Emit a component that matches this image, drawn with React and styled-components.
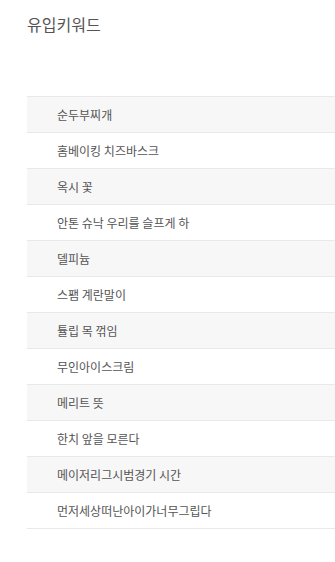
import React from "react";
import styled, { createGlobalStyle } from "styled-components";

const Global = createGlobalStyle`
  html, body { margin: 0; padding: 0; background: #fff; }
  body { font-family: "Noto Sans CJK KR", "Noto Sans", sans-serif; }
`;

const Panel = styled.section`
  padding: 13px 0 0 27px;
`;

const Title = styled.h2`
  margin: 0;
  font-size: 16px;
  font-weight: 400;
  line-height: 22px;
  color: #555;
`;

const List = styled.ul`
  list-style: none;
  margin: 61px 0 0;
  padding: 0;
  border-bottom: 1px solid #e9e9e9;
`;

const Row = styled.li`
  height: 35px;
  border-top: 1px solid #e9e9e9;
  background: ${(p) => (p.$shaded ? "#f7f7f7" : "#fff")};
  display: flex;
  align-items: center;
  padding-left: 30px;
  font-size: 12px;
  color: #555;
`;

const keywords = [
  "순두부찌개",
  "홈베이킹 치즈바스크",
  "옥시 꽃",
  "안톤 슈낙 우리를 슬프게 하",
  "델피늄",
  "스팸 계란말이",
  "튤립 목 꺾임",
  "무인아이스크림",
  "메리트 뜻",
  "한치 앞을 모른다",
  "메이저리그시범경기 시간",
  "먼저세상떠난아이가너무그립다",
];

export default function App() {
  return (
    <>
      <Global />
      <Panel>
        <Title>유입키워드</Title>
        <List>
          {keywords.map((k, i) => (
            <Row key={k} $shaded={i % 2 === 0}>
              {k}
            </Row>
          ))}
        </List>
      </Panel>
    </>
  );
}
